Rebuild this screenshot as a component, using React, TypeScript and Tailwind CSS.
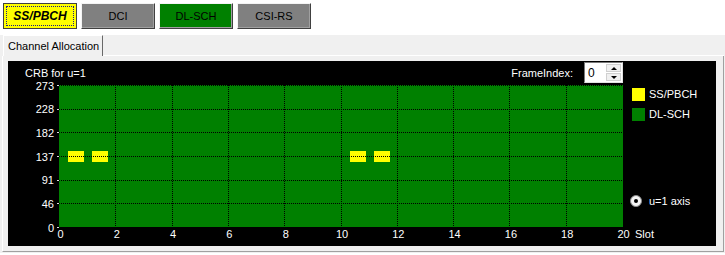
import React from 'react'

const Y_LABELS = [273, 228, 182, 137, 91, 46, 0]
const X_LABELS = [0, 2, 4, 6, 8, 10, 12, 14, 16, 18, 20]

// plot box inside the svg (svg origin = chart panel left, 20px below its top)
const PX = 51
const PY = 4
const PW = 563
const PH = 142

const SSB_BLOCKS = [60, 84, 342, 366]

function PlotArea() {
  const xs = X_LABELS.map((_, k) => PX + (k * PW) / 10)
  const ys = Y_LABELS.map((_, i) => PY + (i * PH) / 6)

  return (
    <svg width={622} height={165} className="block shrink-0 overflow-visible">
      <rect x={PX} y={PY} width={PW + 1} height={PH} fill="#008000" />

      {SSB_BLOCKS.map(x => (
        <rect key={x} x={x} y={70} width={16} height={11} fill="#ffff00" />
      ))}

      {/* grid */}
      <g stroke="#000" strokeDasharray="1 1" shapeRendering="crispEdges">
        {xs.slice(1, 10).map(x => (
          <line key={x} x1={Math.round(x) + 0.5} y1={PY} x2={Math.round(x) + 0.5} y2={PY + PH} />
        ))}
        {ys.slice(0, 6).map(y => (
          <line key={y} x1={PX} y1={Math.round(y) + 0.5} x2={PX + PW + 1} y2={Math.round(y) + 0.5} />
        ))}
      </g>

      {/* y axis */}
      <g stroke="#e0e0e0" shapeRendering="crispEdges">
        {ys.map(y => (
          <line key={y} x1={49} y1={Math.round(y) + 0.5} x2={51} y2={Math.round(y) + 0.5} />
        ))}
      </g>
      <g fill="#fff" fontSize={11} fontFamily="'Liberation Sans', Arial, sans-serif">
        {Y_LABELS.map((v, i) => (
          <text key={v} x={46} y={ys[i] + 4.5} textAnchor="end">{v}</text>
        ))}
        {X_LABELS.map((v, k) => (
          <text key={v} x={xs[k] + 1.5} y={157} textAnchor="middle">{v}</text>
        ))}
      </g>
    </svg>
  )
}

function SpinBox() {
  return (
    <div className="mt-[1px] flex h-[21px] w-[39px] border border-t-[#7a7a7a] border-l-[#7a7a7a] border-r-[#e3e3e3] border-b-[#e3e3e3] bg-white">
      <div className="flex-1 pl-[3px] pt-[3px] text-[12px] leading-[14px] text-black">0</div>
      <div className="flex w-[16px] flex-col gap-[1px] py-[1px] pr-[1px]">
        <div className="flex flex-1 items-center justify-center border border-[#d0d0d0] bg-[#f0f0f0]">
          <div className="h-0 w-0 border-x-[3px] border-b-[3px] border-x-transparent border-b-black" />
        </div>
        <div className="flex flex-1 items-center justify-center border border-[#d0d0d0] bg-[#f0f0f0]">
          <div className="h-0 w-0 border-x-[3px] border-t-[3px] border-x-transparent border-t-black" />
        </div>
      </div>
    </div>
  )
}

function ChartPanel() {
  return (
    <div className="flex h-[185px] w-[708px] flex-col bg-black text-[11px] leading-[13px] text-white">
      <div className="flex h-[20px] items-start">
        <span className="ml-[17px] mt-[6px]">CRB for u=1</span>
        <span className="ml-auto mr-[11px] mt-[6px]">FrameIndex:</span>
        <SpinBox />
        <div className="w-[93px]" />
      </div>

      <div className="flex">
        <PlotArea />
        <div className="flex flex-col">
          <div className="ml-[2px] mt-[7px] flex h-[13px] items-center gap-[4px]">
            <div className="h-[13px] w-[13px] bg-[#ffff00]" />
            <span>SS/PBCH</span>
          </div>
          <div className="ml-[2px] mt-[7px] flex h-[13px] items-center gap-[4px]">
            <div className="h-[13px] w-[13px] bg-[#008000]" />
            <span>DL-SCH</span>
          </div>
          <div className="mt-[74px] flex h-[12px] items-center gap-[7px]">
            <div className="flex h-[12px] w-[12px] items-center justify-center rounded-full border border-[#8a8a8a] bg-[#f4f4f4]">
              <div className="h-[4px] w-[4px] rounded-full bg-black" />
            </div>
            <span>u=1 axis</span>
          </div>
          <span className="ml-[5px] mt-[21px]">Slot</span>
        </div>
      </div>
    </div>
  )
}

const BUTTONS = [
  { label: 'DCI', bg: 'bg-[#808080]' },
  { label: 'DL-SCH', bg: 'bg-[#008000]' },
  { label: 'CSI-RS', bg: 'bg-[#808080]' },
]

export default function App() {
  return (
    <div className="h-[255px] w-[725px] overflow-hidden bg-white font-['Liberation_Sans',Arial,sans-serif] text-[11px] leading-[13px] text-black">
      {/* channel buttons */}
      <div className="flex h-[35px] gap-[4px] pl-[3px] pt-[3px]">
        <button className="flex h-[26px] w-[74px] items-center justify-center border border-[#404040] bg-[#ffff00] p-[2px]">
          <span className="flex h-full w-full items-center justify-center border border-dotted border-[#1a1a8c] text-[12px] font-bold italic">
            SS/PBCH
          </span>
        </button>
        {BUTTONS.map(b => (
          <button
            key={b.label}
            className={`flex h-[26px] w-[74px] items-center justify-center border border-t-[#f4f4f4] border-l-[#f4f4f4] border-r-[#404040] border-b-[#404040] shadow-[inset_-1px_-1px_0_#a0a0a0] ${b.bg}`}
          >
            {b.label}
          </button>
        ))}
      </div>

      {/* tab control */}
      <div className="h-[218px] bg-[#f0f0f0] pl-[2px]">
        <div className="flex h-[21px] w-[722px]">
          <div className="ml-[1px] flex w-[100px] items-center border-l border-t border-r border-l-white border-t-white border-r-[#696969] pl-[4px] pt-[1px]">
            Channel Allocation
          </div>
          <div className="flex-1 border-b border-white" />
        </div>
        <div className="h-[196px] w-[722px] border-b border-l border-r border-b-[#a0a0a0] border-l-white border-r-[#a0a0a0] pb-[5px] pl-[5px] pr-[7px] pt-[5px]">
          <ChartPanel />
        </div>
      </div>
    </div>
  )
}
